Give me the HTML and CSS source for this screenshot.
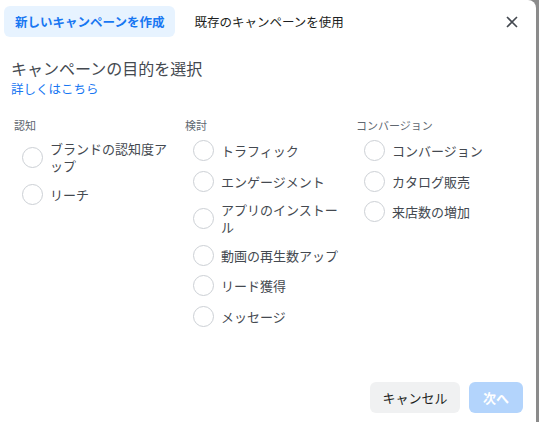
FILE: index.html
```html
<!DOCTYPE html>
<html lang="ja">
<head>
<meta charset="utf-8">
<link rel="stylesheet" href="styles.css">
</head>
<body>
<div class="dialog">
  <div class="header">
    <div class="tab active">新しいキャンペーンを作成</div>
    <div class="tab">既存のキャンペーンを使用</div>
    <svg class="close" viewBox="0 0 12 12" width="12" height="12"><path d="M1 1L11 11M11 1L1 11" stroke="#444950" stroke-width="1.6" fill="none"/></svg>
  </div>
  <div class="title">キャンペーンの目的を選択</div>
  <a class="link">詳しくはこちら</a>
  <div class="columns">
    <div class="col">
      <div class="label">認知</div>
      <div class="options">
        <div class="opt"><span class="radio"></span><span class="txt">ブランドの認知度アップ</span></div>
        <div class="opt"><span class="radio"></span><span class="txt">リーチ</span></div>
      </div>
    </div>
    <div class="col">
      <div class="label">検討</div>
      <div class="options">
        <div class="opt"><span class="radio"></span><span class="txt">トラフィック</span></div>
        <div class="opt"><span class="radio"></span><span class="txt">エンゲージメント</span></div>
        <div class="opt"><span class="radio"></span><span class="txt">アプリのインストール</span></div>
        <div class="opt"><span class="radio"></span><span class="txt">動画の再生数アップ</span></div>
        <div class="opt"><span class="radio"></span><span class="txt">リード獲得</span></div>
        <div class="opt"><span class="radio"></span><span class="txt">メッセージ</span></div>
      </div>
    </div>
    <div class="col">
      <div class="label">コンバージョン</div>
      <div class="options">
        <div class="opt"><span class="radio"></span><span class="txt">コンバージョン</span></div>
        <div class="opt"><span class="radio"></span><span class="txt">カタログ販売</span></div>
        <div class="opt"><span class="radio"></span><span class="txt">来店数の増加</span></div>
      </div>
    </div>
  </div>
  <div class="footer">
    <button class="btn cancel">キャンセル</button>
    <button class="btn next">次へ</button>
  </div>
</div>
</body>
</html>
```
FILE: styles.css
```css
html, body {
  margin: 0;
  padding: 0;
}
body {
  background: #8b8b8b;
  font-family: "Noto Sans CJK JP", "Noto Sans", sans-serif;
  width: 539px;
  height: 422px;
  overflow: hidden;
}
.dialog {
  width: 536px;
  height: 422px;
  background: #fff;
  border-top-right-radius: 8px;
  display: flex;
  flex-direction: column;
  box-sizing: border-box;
}
.header {
  display: flex;
  align-items: center;
  padding: 6px 18px 0 4px;
  gap: 8px;
}
.tab {
  height: 31px;
  line-height: 31px;
  padding: 0 11px;
  border-radius: 6px;
  font-size: 12.5px;
  color: #1c1e21;
  white-space: nowrap;
}
.tab.active {
  background: #e7f3ff;
  color: #1877f2;
  font-weight: bold;
}
.close {
  margin-left: auto;
  display: block;
}
.title {
  margin-top: 22px;
  padding-left: 11px;
  font-size: 16px;
  line-height: 18px;
  color: #444950;
}
.link {
  margin-top: 4px;
  padding-left: 11px;
  font-size: 12.5px;
  line-height: 15px;
  color: #1877f2;
}
.columns {
  margin-top: 22px;
  padding-left: 14px;
  display: grid;
  grid-template-columns: 171px 171px 171px;
}
.label {
  font-size: 11px;
  line-height: 14px;
  color: #606770;
}
.options {
  margin-top: 8px;
  display: flex;
  flex-direction: column;
  gap: 9.5px;
  padding-left: 8px;
}
.opt {
  display: flex;
  align-items: center;
  gap: 7px;
  min-height: 21px;
}
.radio {
  width: 21px;
  height: 21px;
  box-sizing: border-box;
  border: 1px solid #ccd0d5;
  border-radius: 50%;
  flex: none;
}
.txt {
  width: 122px;
  font-size: 13px;
  line-height: 17px;
  color: #444950;
}
.footer {
  margin-top: auto;
  display: flex;
  justify-content: flex-end;
  gap: 9px;
  padding: 0 13px 9px 0;
}
.btn {
  height: 31px;
  border: none;
  border-radius: 6px;
  font-family: inherit;
  font-size: 13px;
  padding: 0;
}
.cancel {
  width: 90px;
  background: #f0f1f2;
  color: #1c1e21;
}
.next {
  width: 54px;
  background: #b3d4fc;
  color: #fff;
  font-weight: bold;
}
```
